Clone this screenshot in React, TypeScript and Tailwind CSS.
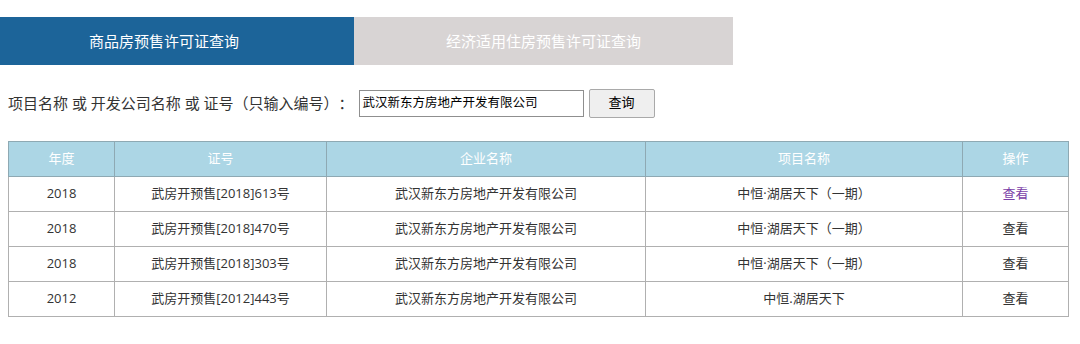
import React from "react";

const rows = [
  { y: "2018", no: "武房开预售[2018]613号", pj: "中恒·湖居天下（一期）", visited: true },
  { y: "2018", no: "武房开预售[2018]470号", pj: "中恒·湖居天下（一期）", visited: false },
  { y: "2018", no: "武房开预售[2018]303号", pj: "中恒·湖居天下（一期）", visited: false },
  { y: "2012", no: "武房开预售[2012]443号", pj: "中恒.湖居天下", visited: false },
];

const font = { fontFamily: '"Open Sans", "Noto Sans CJK SC", sans-serif' };

export default function App() {
  return (
    <div className="w-[1080px] h-[344px] bg-white text-[#333] [text-spacing-trim:space-all]" style={font}>
      <div className="h-[17px]" />
      <div className="flex h-[48px]">
        <div className="w-[354px] pr-[26px] bg-[#1c6499] text-white text-[15px] flex items-center justify-center">
          商品房预售许可证查询
        </div>
        <div className="w-[379px] bg-[#d8d4d4] text-white text-[15px] flex items-center justify-center">
          经济适用住房预售许可证查询
        </div>
      </div>
      <div className="flex items-center pl-[8px] mt-[24px] h-[28px]">
        <span className="text-[15px] text-[#333] whitespace-pre">项目名称 或 开发公司名称 或 证号（只输入编号）：</span>
        <div className="ml-[5px] w-[225px] h-[27px] border border-[#8f8f8f] flex items-center px-[3px] text-[12.5px] text-black">
          武汉新东方房地产开发有限公司
        </div>
        <div className="ml-[5px] w-[66px] h-[29px] border border-[#a9a9a9] rounded-[2px] bg-[#efefef] flex items-center justify-center text-[13px] text-black">
          查询
        </div>
      </div>
      <div className="mt-[24px] ml-[8px] w-[1060px]">
        <table className="w-full border-collapse table-fixed text-[13px]">
          <colgroup>
            <col className="w-[106px]" />
            <col className="w-[212px]" />
            <col className="w-[319px]" />
            <col className="w-[317px]" />
            <col className="w-[106px]" />
          </colgroup>
          <thead>
            <tr className="h-[35px] bg-[#acd6e5] text-white">
              {["年度", "证号", "企业名称", "项目名称", "操作"].map((h) => (
                <th key={h} className="border border-[#8ea9b3] font-normal text-center">{h}</th>
              ))}
            </tr>
          </thead>
          <tbody>
            {rows.map((r, i) => (
              <tr key={i} className="h-[35px]">
                <td className="border border-[#b0b0b0] text-center">{r.y}</td>
                <td className="border border-[#b0b0b0] text-center">{r.no}</td>
                <td className="border border-[#b0b0b0] text-center">武汉新东方房地产开发有限公司</td>
                <td className="border border-[#b0b0b0] text-center">{r.pj}</td>
                <td className={"border border-[#b0b0b0] text-center " + (r.visited ? "text-[#7b3fa8]" : "text-[#333]")}>查看</td>
              </tr>
            ))}
          </tbody>
        </table>
      </div>
    </div>
  );
}
